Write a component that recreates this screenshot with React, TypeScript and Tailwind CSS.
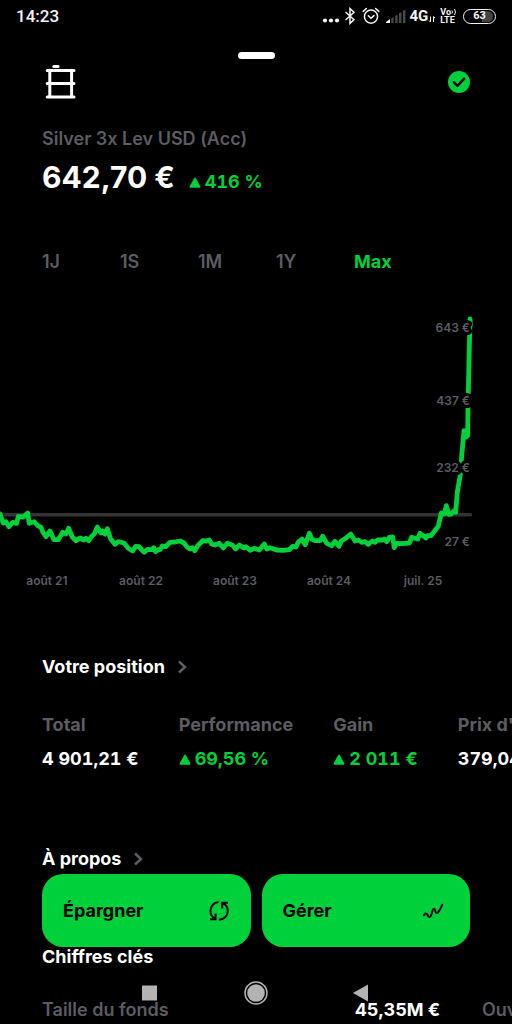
import { ReactNode, useState } from "react";
import clsx from "clsx";

const RANGES = ["1J", "1S", "1M", "1Y", "Max"];

const DATES = ["août 21", "août 22", "août 23", "août 24", "juil. 25"];

const PRICES = [
  { label: "643 €", y: 23 },
  { label: "437 €", y: 96 },
  { label: "232 €", y: 163 },
  { label: "27 €", y: 237 },
];

const POSITION = [
  { label: "Total", value: "4 901,21 €", up: false },
  { label: "Performance", value: "69,56 %", up: true },
  { label: "Gain", value: "2 011 €", up: true },
  { label: "Prix d'achat", value: "379,04 €", up: false },
];

const PRICE_LINE =
  "0,205 3.3,214 6,212.7 9,217.7 12.7,213.3 16.7,214.3 18.3,207.3 23.3,208 27.7,204 29.3,214.3 34.3,212.7 38.3,217.3 41,218 42.7,222.7 46,227.7 50,222 54,230.7 58.3,230.7 62.7,223.3 65.7,225 68.7,219.3 72.3,228 76,231.7 80,229 84,231 86,229.3 88.7,231.7 91.7,227.3 94.3,225 97.3,218 101,224 102.7,222 105,225 107.3,219.7 110.7,230 115,235.3 118.3,232.7 124,234 128.3,239.3 132.7,242 135.7,237.3 139,237.7 141.7,240.7 144.3,243.3 147.7,240.3 151.7,240.7 153.7,238.7 155.7,242.7 158.3,240.7 160,240.7 162.3,237 165.7,237.7 170,233.3 175,233 180,232 184,234 187.3,238.3 190,240 192.3,238.7 194.7,241.7 197.7,236.7 202.7,231.7 206.7,232 209.3,231 211.7,235 215,236 219.3,234.3 223.3,239 227.3,234.3 232.3,236 235.7,240 239.3,236 244,239 246,237.7 250,241.3 " +
  "254,239.3 259.3,241 264.3,235 266.7,240 270,238.7 276.7,241 283.3,241.3 289.3,240.7 292.7,237.3 296,238 298.3,233 302,230 305.3,235.7 309.3,224.3 311.7,230 315,231.7 320,231.7 322.7,227.3 326.7,234.3 331.7,236.7 335,232.3 339,237.3 341.3,232 346,229 350.7,225 355,232 358.3,231 361.7,233.3 365,232.7 368.3,235.3 372.3,232 375,233.3 377.7,231 382.7,231 384.3,230 386.7,232.7 389.3,228.3 392.7,228 394.3,238.7 396.7,234.3 401.7,234.7 409.3,234 411.7,228.3 417.7,230 420,224.3 426,229 427.3,226.7 431,226.7 438.3,217.3 441.3,204 444.3,205 446.3,196.7 448.7,205.3 451.3,205 454,201.7 455.7,203.3 457.3,183.3 460.7,163.3 461.7,146.7 464,121.7 466,128 467.7,126.7 468,96.7 470,10 470.4,16";

function Triangle() {
  return (
    <svg viewBox="0 0 12 12" className="w-3 h-3 shrink-0" fill="currentColor" aria-hidden="true">
      <path d="M5 2.4Q6 .8 7 2.4L11.2 10Q11.8 11.7 10.4 11.7H1.6Q.2 11.7.8 10Z" />
    </svg>
  );
}

function StatusBar() {
  return (
    <div className="flex h-8 items-center justify-between pl-4 pr-4 font-['Roboto',sans-serif] text-gray-100">
      <span className="text-[17px] font-medium leading-5">14:23</span>
      <div className="flex items-center">
        {/* Notifications */}
        <svg viewBox="0 0 18 18" className="h-[18px] w-[18px]" fill="currentColor">
          <circle cx="3" cy="13.5" r="2.1" />
          <circle cx="9" cy="13.5" r="2.1" />
          <circle cx="15" cy="13.5" r="2.1" />
        </svg>
        {/* Bluetooth */}
        <svg viewBox="0 0 12 18" className="ml-1 h-[18px] w-3" fill="none" stroke="currentColor" strokeWidth="1.5">
          <path d="M1.5 5L10 12.7 6 16.4V1.6L10 5.3 1.5 13" />
        </svg>
        {/* Alarm */}
        <svg viewBox="0 0 18 18" className="ml-[6px] h-[18px] w-[18px]" fill="none" stroke="currentColor" strokeWidth="1.5" strokeLinecap="round">
          <circle cx="9" cy="9.6" r="6.6" />
          <path d="M1.2 4.4L4.4 1.5M16.8 4.4L13.6 1.5M6.4 8.8L9 11.2 12 8.6" />
        </svg>
        {/* Signal */}
        <svg viewBox="0 0 20 16" className="ml-[6px] h-4 w-5" fill="#4a4a4a">
          <path d="M0 15V14L4 11V15Z" fill="#f3f4f6" />
          <path d="M5.2 15V10.5L7.6 8.8V15ZM9.2 15V8L11.6 6.4V15ZM13 15V5.6L15.4 4V15ZM17 15V2.8L19.4 1.4V15Z" />
        </svg>
        <span className="ml-[3px] text-[15px] font-bold leading-5">4G</span>
        <svg viewBox="0 0 8 16" className="h-4 w-2" fill="none" stroke="currentColor" strokeWidth="1">
          <path d="M2.5 8.5V14M1 12.5L2.5 14M5.5 14V8.5L7 10" />
        </svg>
        <div className="ml-1 text-[9px] font-bold leading-2">
          <div className="flex items-center">
            Vo
            <svg viewBox="0 0 6 8" className="h-2 w-[6px]" fill="none" stroke="currentColor" strokeWidth="1">
              <path d="M1 2.5Q2 4 1 5.5M3.5 1Q5.5 4 3.5 7" />
            </svg>
          </div>
          <div>LTE</div>
        </div>
        {/* Battery */}
        <div className="relative ml-[6px] flex h-[15px] w-[33px] items-center justify-center rounded-full border border-gray-100">
          <div className="absolute inset-y-[1px] right-[2px] w-[11px] rounded-r-full bg-[#444]" />
          <span className="relative text-[11px] font-bold leading-3">63</span>
        </div>
      </div>
    </div>
  );
}

function BarrelIcon() {
  return (
    <svg viewBox="0 0 32 36" className="ml-[2px] h-9 w-8" fill="none" stroke="white" strokeWidth="3" strokeLinecap="round" aria-label="Silver">
      <path d="M9.8 2.4H14" />
      <path d="M5.8 6.2V32M27.6 6.2V32" />
      <path d="M3.2 6.4H30M3.2 19.6H30M3.2 33H30" />
    </svg>
  );
}

function Chart() {
  return (
    <div className="mt-[35px]">
      <svg viewBox="0 0 512 250" className="block h-auto w-full font-['Inter',sans-serif]">
        <path d="M0 205.7H470.5" stroke="#333335" strokeWidth="3.6" strokeLinecap="round" />
        <polyline points={PRICE_LINE} fill="none" stroke="#00d13b" strokeWidth="4.8" strokeLinejoin="round" strokeLinecap="round" />
        {PRICES.map((price) => (
          <text
            key={price.label}
            x="470"
            y={price.y}
            textAnchor="end"
            fill="#5c5c62"
            stroke="black"
            strokeWidth="6"
            strokeLinejoin="round"
            paintOrder="stroke"
            className="text-[12px] font-semibold"
          >
            {price.label}
          </text>
        ))}
      </svg>
      <div className="mr-[42px] mt-3 grid grid-cols-5 text-center text-[12px] font-semibold leading-5 text-[#5c5c62]">
        {DATES.map((date) => (
          <span key={date}>{date}</span>
        ))}
      </div>
    </div>
  );
}

function SectionLink({ children }: { children: ReactNode }) {
  return (
    <a href="#" className="flex items-center gap-3 px-[42px] text-lg font-bold leading-6">
      {children}
      <svg viewBox="0 0 10 14" className="h-[14px] w-[10px]" fill="none" stroke="#5c5c62" strokeWidth="2.5">
        <path d="M2 1.5L8 7L2 12.5" />
      </svg>
    </a>
  );
}

function ActionButton({ label, children }: { label: string; children: ReactNode }) {
  return (
    <button className="flex h-[73px] items-center justify-between rounded-[21px] bg-[#00d13b] px-[21px] text-lg font-bold text-black">
      {label}
      {children}
    </button>
  );
}

export default function App() {
  const [range, setRange] = useState("Max");

  return (
    <div className="min-h-screen overflow-hidden bg-black font-['Inter',sans-serif] text-white">
      <StatusBar />

      {/* Sheet handle */}
      <div className="mx-auto mt-5 h-[7px] w-[37px] rounded-full bg-white" />

      <header className="px-[42px] pt-[5px]">
        <div className="flex items-center justify-between">
          <BarrelIcon />
          <svg viewBox="0 0 22 22" className="h-[22px] w-[22px]" aria-label="Suivi">
            <circle cx="11" cy="11" r="11" fill="#00d13b" />
            <path d="M5.8 11.2L9.5 15L16.2 7.6" fill="none" stroke="black" strokeWidth="2.4" strokeLinecap="round" strokeLinejoin="round" />
          </svg>
        </div>
        <h1 className="mt-[27px] text-lg font-semibold leading-6 text-[#5c5c62]">
          Silver 3x Lev USD (Acc)
        </h1>
        <div className="mt-[6px] flex items-baseline gap-[14px]">
          <span className="text-[30px] font-bold leading-10">642,70 €</span>
          <span className="flex items-center gap-1 text-lg font-bold leading-6 tabular-nums text-[#00d13b]">
            <Triangle />
            416 %
          </span>
        </div>
      </header>

      {/* Range selector */}
      <div className="mt-[53px] flex px-[42px]">
        {RANGES.map((item) => (
          <button
            key={item}
            onClick={() => setRange(item)}
            className={clsx(
              "w-[78px] text-left text-lg leading-6",
              item === range ? "font-bold text-[#00d13b]" : "font-semibold text-[#5c5c62]"
            )}
          >
            {item}
          </button>
        ))}
      </div>

      <Chart />

      <section className="mt-16">
        <SectionLink>Votre position</SectionLink>
        <dl className="mt-[34px] flex gap-10 overflow-hidden whitespace-nowrap pl-[42px] text-lg font-bold leading-6">
          {POSITION.map((item) => (
            <div key={item.label} className="shrink-0">
              <dt className="text-[#5c5c62]">{item.label}</dt>
              <dd className={clsx("mt-[10px] flex items-center gap-1 tabular-nums", item.up && "text-[#00d13b]")}>
                {item.up && <Triangle />}
                {item.value}
              </dd>
            </div>
          ))}
        </dl>
      </section>

      <section className="mt-[76px]">
        <SectionLink>À propos</SectionLink>
        <h2 className="mt-[74px] px-[42px] text-lg font-bold leading-6">Chiffres clés</h2>
        <dl className="mt-[29px] flex gap-[42px] overflow-hidden whitespace-nowrap pl-[42px] text-lg font-semibold leading-6">
          <div className="flex w-[398px] shrink-0 justify-between">
            <dt className="text-[#5c5c62]">Taille du fonds</dt>
            <dd className="font-bold">45,35M €</dd>
          </div>
          <div className="shrink-0">
            <dt className="text-[#5c5c62]">Ouverture</dt>
          </div>
        </dl>
      </section>

      {/* Actions */}
      <div className="fixed inset-x-0 bottom-[77px] grid grid-cols-2 gap-[11px] px-[42px]">
        <ActionButton label="Épargner">
          <svg viewBox="0 0 21 20" className="h-5 w-[21px]" fill="none" stroke="black" strokeWidth="2" aria-hidden="true">
            <path d="M9.6 1C4.6 1.6 1.4 5.4 1.4 10C1.4 13.5 3.2 16.2 6.2 17.8M1 18.2H6.6V12.4M9.8 18.8C15.2 18.4 18.8 14.6 18.8 10C18.8 6.5 17 3.8 13.8 2.2M19 1.8H13.2V7.6" />
          </svg>
        </ActionButton>
        <ActionButton label="Gérer">
          <svg viewBox="0 0 32 20" className="h-5 w-8" fill="none" stroke="black" strokeWidth="2" strokeLinecap="round" strokeLinejoin="round" aria-hidden="true">
            <path d="M7 14.2C7.8 12 9.4 11.8 10.4 13.6C11.2 16.8 13.4 17 14.2 14L15.6 9.6C16.4 7 17.6 7.2 18.2 9.6C18.8 12.6 20.4 12.8 21.8 10.4C23.2 8.2 24.4 6 25.2 3.8" />
          </svg>
        </ActionButton>
      </div>

      {/* System navigation */}
      <nav className="fixed inset-x-0 bottom-[19px] flex items-center justify-center gap-[83px] text-[#b3b3b3]">
        <button aria-label="Applications récentes" className="h-6 w-6">
          <svg viewBox="0 0 24 24" fill="currentColor">
            <path d="M5 4.5H20V19.5H5Z" />
          </svg>
        </button>
        <button aria-label="Accueil" className="h-6 w-6">
          <svg viewBox="0 0 24 24" fill="currentColor">
            <circle cx="12" cy="12" r="8.8" />
            <circle cx="12" cy="12" r="11" fill="none" stroke="currentColor" strokeWidth="1.5" />
          </svg>
        </button>
        <button aria-label="Retour" className="h-6 w-6">
          <svg viewBox="0 0 24 24" fill="currentColor">
            <path d="M17 3.5V20.5L2 12Z" />
          </svg>
        </button>
      </nav>
    </div>
  );
}
